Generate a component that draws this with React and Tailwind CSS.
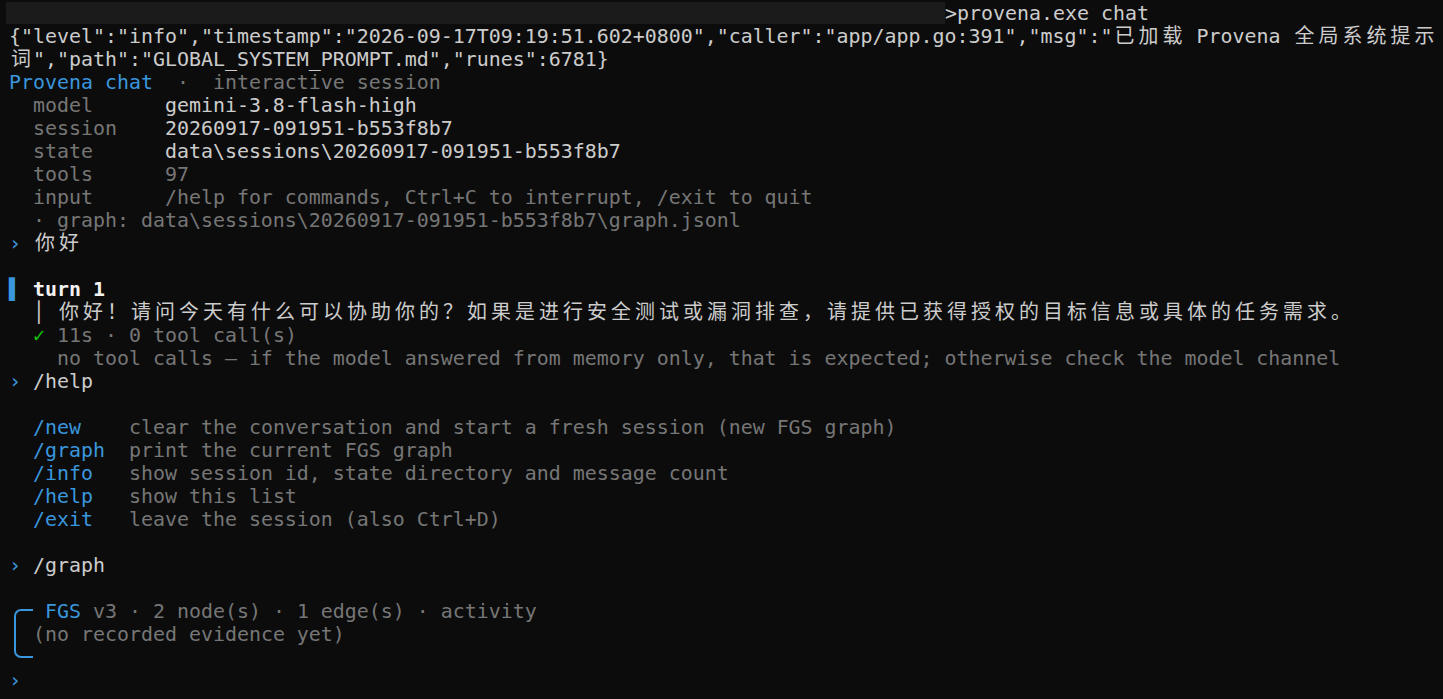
const WIDE = /[\u3000-\u9fff\uff00-\uffef]/

// terminal cell text: CJK glyphs take two cells (24px)
function T({ children, className = '' }) {
  const parts = []
  let buf = ''
  for (const ch of String(children)) {
    if (WIDE.test(ch)) {
      if (buf) { parts.push(buf); buf = '' }
      parts.push(<span key={parts.length} className="inline-block w-[24px] text-center">{ch}</span>)
    } else {
      buf += ch
    }
  }
  if (buf) parts.push(buf)
  return <span className={className}>{parts}</span>
}

function Row({ children }) {
  return <div className="h-[23px] leading-[23px] whitespace-pre">{children}</div>
}

const BLUE = 'text-[#3a96dd]'
const DIM = 'text-[#767676]'

const META = [
  ['model', 'gemini-3.8-flash-high', false],
  ['session', '20260917-091951-b553f8b7', false],
  ['state', 'data\\sessions\\20260917-091951-b553f8b7', false],
  ['tools', '97', true],
  ['input', '/help for commands, Ctrl+C to interrupt, /exit to quit', true],
]

const COMMANDS = [
  ['/new', 'clear the conversation and start a fresh session (new FGS graph)'],
  ['/graph', 'print the current FGS graph'],
  ['/info', 'show session id, state directory and message count'],
  ['/help', 'show this list'],
  ['/exit', 'leave the session (also Ctrl+D)'],
]

function Prompt({ text }) {
  return (
    <Row>
      <span className={BLUE}>› </span>
      <T className="text-[#cccccc]">{text}</T>
    </Row>
  )
}

export default function App() {
  return (
    <div className="min-h-screen bg-[#0c0c0c] pt-[2px] pl-[9px] overflow-hidden text-[#cccccc] text-[19.93px] font-['DejaVu_Sans_Mono','Noto_Sans_CJK_SC',monospace]">
      {/* command line (path redacted) */}
      <Row>
        <span className="inline-block align-top -ml-[3px] w-[939px] h-[22px] bg-[#1b1b1b]" />
        <span>&gt;provena.exe chat</span>
      </Row>
      <Row>
        <T>{'{"level":"info","timestamp":"2026-09-17T09:19:51.602+0800","caller":"app/app.go:391","msg":"已加载 Provena 全局系统提示'}</T>
      </Row>
      <Row>
        <T>{'词","path":"GLOBAL_SYSTEM_PROMPT.md","runes":6781}'}</T>
      </Row>

      {/* banner */}
      <Row>
        <span className={BLUE}>Provena chat</span>
        <span className={DIM}>  ·  interactive session</span>
      </Row>
      {META.map(([k, v, dim]) => (
        <Row key={k}>
          <span className={DIM}>{'  ' + k.padEnd(11)}</span>
          <span className={dim ? DIM : 'text-[#cccccc]'}>{v}</span>
        </Row>
      ))}
      <Row>
        <span className={DIM}>  · graph: data\sessions\20260917-091951-b553f8b7\graph.jsonl</span>
      </Row>

      <Prompt text="你好" />
      <Row> </Row>

      {/* turn */}
      <Row>
        <span className={BLUE}>▌ </span>
        <span className="text-[#f2f2f2] font-bold">turn 1</span>
      </Row>
      <Row>
        <span className="text-[#cccccc]">  │ </span>
        <T className="text-[#cccccc]">你好！请问今天有什么可以协助你的？如果是进行安全测试或漏洞排查，请提供已获得授权的目标信息或具体的任务需求。</T>
      </Row>
      <Row>
        <span>  </span>
        <span className="text-[#16c60c] font-bold">✓</span>
        <span className={DIM}> 11s · 0 tool call(s)</span>
      </Row>
      <Row>
        <span className={DIM}>    no tool calls — if the model answered from memory only, that is expected; otherwise check the model channel</span>
      </Row>

      <Prompt text="/help" />
      <Row> </Row>
      {COMMANDS.map(([c, d]) => (
        <Row key={c}>
          <span>  </span>
          <span className={BLUE}>{c.padEnd(8)}</span>
          <span className={DIM}>{d}</span>
        </Row>
      ))}
      <Row> </Row>

      <Prompt text="/graph" />
      <Row> </Row>

      {/* graph block */}
      <div className="flex">
        <div className="w-[24px] shrink-0">
          <div className="ml-[5px] mt-[9px] w-[19px] h-[49px] border-l-2 border-t-2 border-b-2 border-[#3a96dd] rounded-l-[7px]" />
        </div>
        <div>
          <Row>
            <span> </span>
            <span className={BLUE}>FGS</span>
            <span className={DIM}> v3 · 2 node(s) · 1 edge(s) · activity</span>
          </Row>
          <Row>
            <span className={DIM}>(no recorded evidence yet)</span>
          </Row>
          <Row> </Row>
        </div>
      </div>

      <Row>
        <span className={BLUE}>›</span>
      </Row>
    </div>
  )
}
